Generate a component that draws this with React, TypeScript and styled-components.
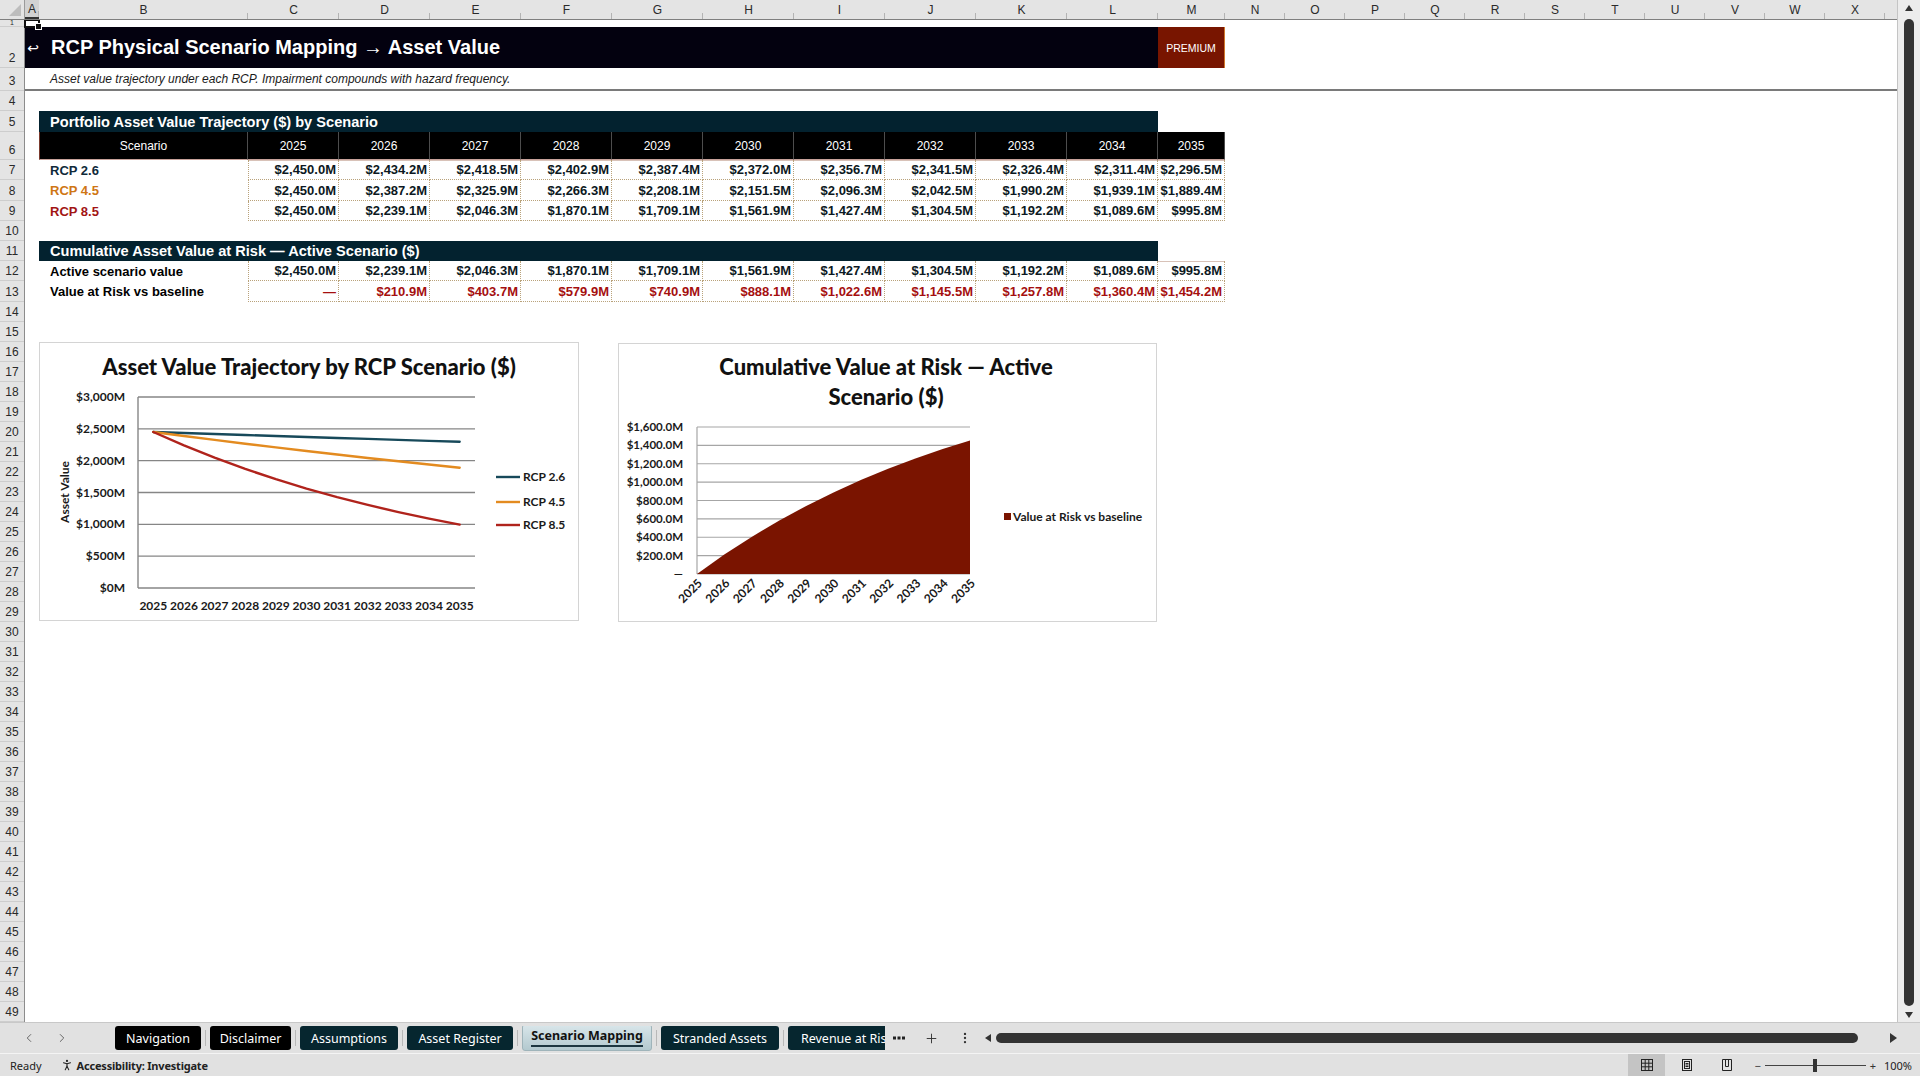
import React from "react";
import styled, { createGlobalStyle, css } from "styled-components";
import { ChevronLeft, ChevronRight, Plus, EllipsisVertical, PersonStanding } from "lucide-react";

const XL = `"Liberation Sans", Arial, sans-serif`;
const CHART = `Lato, "Open Sans", sans-serif`;
const UI = `"Noto Sans", "Segoe UI", sans-serif`;
const GRID = "14px 209px repeat(10, 91px) 67px 1fr";

const years = [2025, 2026, 2027, 2028, 2029, 2030, 2031, 2032, 2033, 2034, 2035];

const scenarios = [
  {
    label: "RCP 2.6",
    color: "#0f2a3a",
    line: "#17495a",
    values: [2450.0, 2434.2, 2418.5, 2402.9, 2387.4, 2372.0, 2356.7, 2341.5, 2326.4, 2311.4, 2296.5],
  },
  {
    label: "RCP 4.5",
    color: "#cf7614",
    line: "#e38b20",
    values: [2450.0, 2387.2, 2325.9, 2266.3, 2208.1, 2151.5, 2096.3, 2042.5, 1990.2, 1939.1, 1889.4],
  },
  {
    label: "RCP 8.5",
    color: "#a21414",
    line: "#b0231c",
    values: [2450.0, 2239.1, 2046.3, 1870.1, 1709.1, 1561.9, 1427.4, 1304.5, 1192.2, 1089.6, 995.8],
  },
];

const activeValues = scenarios[2].values;
const valueAtRisk = [0, 210.9, 403.7, 579.9, 740.9, 888.1, 1022.6, 1145.5, 1257.8, 1360.4, 1454.2];

const letters = "ABCDEFGHIJKLMNOPQRSTUVWX".split("");
const colWidth = (c: string) =>
  c === "A" ? 14 : c === "B" ? 209 : "CDEFGHIJKL".includes(c) ? 91 : c === "M" ? 67 : 60;

const rowHeights = [7, 41, 23, 20, 21, 28, 20, 21, 20, 20, 20, 20, 21, ...Array(36).fill(20)];

const fmt = (v: number, d = 1) =>
  "$" + v.toLocaleString("en-US", { minimumFractionDigits: d, maximumFractionDigits: d }) + "M";

const tabs = [
  { name: "Navigation", w: 86, bg: "#000000" },
  { name: "Disclaimer", w: 81, bg: "#000000" },
  { name: "Assumptions", w: 98, bg: "#06262f" },
  { name: "Asset Register", w: 106, bg: "#06262f" },
  { name: "Scenario Mapping", w: 130, bg: "", active: true },
  { name: "Stranded Assets", w: 118, bg: "#06262f" },
  { name: "Revenue at Risk", w: 118, bg: "#06262f" },
];

const GlobalStyle = createGlobalStyle`
  html, body { margin: 0; padding: 0; background: #fff; }
  body { font-family: ${XL}; overflow: hidden; }
  #root { width: 1920px; height: 1076px; }
`;

const Window = styled.div`
  width: 1920px;
  height: 1076px;
  display: flex;
  flex-direction: column;
  background: #e1e1e1;
`;

const Main = styled.div`
  height: 1022px;
  display: flex;
  flex: none;
`;

const GridArea = styled.div`
  width: 1898px;
  display: flex;
  flex-direction: column;
  background: #fff;
  border-right: 1px solid #c4c4c4;
  box-sizing: border-box;
`;

const ColHeadRow = styled.div`
  height: 20px;
  display: flex;
  flex: none;
  background: #e4e4e4;
  border-bottom: 1px solid #7f7f7f;
  box-sizing: border-box;
`;

const Corner = styled.div`
  width: 25px;
  flex: none;
  position: relative;
  border-right: 1px solid #9a9a9a;
  box-sizing: border-box;
  &::after {
    content: "";
    position: absolute;
    right: 3px;
    bottom: 3px;
    border-left: 12px solid transparent;
    border-bottom: 12px solid #bdbdbd;
  }
`;

const ColHead = styled.div<{ $w: number; $active?: boolean }>`
  width: ${(p) => p.$w}px;
  flex: none;
  position: relative;
  display: flex;
  align-items: center;
  justify-content: center;
  font-family: ${XL};
  font-size: 12px;
  color: #2a2a2a;
  ${(p) =>
    p.$active &&
    css`
      background: #d2d2d2;
      border-bottom: 2px solid #333;
    `}
  &::after {
    content: "";
    position: absolute;
    right: 0;
    bottom: 0;
    width: 1px;
    height: 6px;
    background: #b3b3b3;
  }
`;

const ColFill = styled.div`
  flex: 1;
`;

const Body = styled.div`
  flex: 1;
  display: flex;
  overflow: hidden;
`;

const RowHeads = styled.div`
  width: 25px;
  flex: none;
  display: flex;
  flex-direction: column;
  background: #e4e4e4;
  border-right: 1px solid #8c8c8c;
  box-sizing: border-box;
`;

const RowNum = styled.div<{ $h: number }>`
  height: ${(p) => p.$h}px;
  flex: none;
  box-sizing: border-box;
  display: flex;
  align-items: flex-end;
  justify-content: center;
  overflow: hidden;
  font-size: ${(p) => (p.$h < 10 ? 7 : 12)}px;
  line-height: ${(p) => (p.$h < 10 ? 6 : 14)}px;
  color: #2a2a2a;
  padding-bottom: ${(p) => (p.$h < 10 ? 0 : 2)}px;
  border-bottom: 1px solid #cdcdcd;
`;

const Sheet = styled.div`
  flex: 1;
  display: flex;
  flex-direction: column;
`;

const SheetRow = styled.div<{ $h: number; $rule?: boolean }>`
  height: ${(p) => p.$h}px;
  flex: none;
  display: grid;
  grid-template-columns: ${GRID};
  box-sizing: border-box;
  ${(p) => p.$rule && css`border-bottom: 2px solid #7a7a7a;`}
`;

const ActiveCell = styled.div`
  grid-column: 1;
  width: 16px;
  height: 9px;
  margin: -1px 0 0 -1px;
  box-sizing: border-box;
  border: 2px solid #111;
  position: relative;
  z-index: 2;
  &::after {
    content: "";
    position: absolute;
    right: -4px;
    bottom: -4px;
    width: 5px;
    height: 5px;
    background: #111;
    border: 1px solid #fff;
  }
`;

const TitleBar = styled.div`
  grid-column: 1 / span 12;
  background: #03010f;
  display: grid;
  grid-template-columns: 14px 1fr;
  align-items: center;
  color: #fff;
`;

const BackArrow = styled.span`
  font-family: "DejaVu Sans", sans-serif;
  font-size: 14px;
  text-align: center;
  margin-left: 2px;
`;

const TitleText = styled.span`
  padding-left: 12px;
  font-size: 20px;
  font-weight: 700;
`;

const Premium = styled.div`
  grid-column: 13;
  background: #781500;
  color: #fff;
  font-size: 10.5px;
  display: flex;
  align-items: center;
  justify-content: center;
  border-right: 1px solid #d0782c;
`;

const Subtitle = styled.div`
  grid-column: 2 / span 12;
  padding-left: 11px;
  font-size: 12px;
  font-style: italic;
  color: #1a1a1a;
  display: flex;
  align-items: center;
`;

const SectionBar = styled.div`
  grid-column: 2 / span 11;
  background: #03222f;
  color: #fff;
  font-size: 14.6px;
  font-weight: 700;
  padding-left: 11px;
  display: flex;
  align-items: center;
`;

const HeadCell = styled.div<{ $label?: boolean }>`
  background: #000;
  color: #fff;
  font-size: 12px;
  display: flex;
  align-items: center;
  justify-content: center;
  border-right: 1px solid #4d4d4d;
  border-bottom: 1px solid #c7a29a;
  ${(p) => p.$label && css`border-left: 1px solid #7a3b2e;`}
`;

const RowLabel = styled.div<{ $color?: string }>`
  grid-column: 2;
  padding-left: 11px;
  font-size: 13px;
  font-weight: 700;
  color: ${(p) => p.$color || "#000"};
  display: flex;
  align-items: center;
`;

const ValueCell = styled.div<{ $color?: string; $first?: boolean; $top?: boolean }>`
  font-size: 13px;
  font-weight: 700;
  color: ${(p) => p.$color || "#0c1822"};
  display: flex;
  align-items: center;
  justify-content: flex-end;
  padding-right: 2px;
  box-sizing: border-box;
  border-right: 1px dotted #b9a27a;
  border-bottom: 1px dotted #b9a27a;
  ${(p) => p.$first && css`border-left: 1px dotted #b9a27a;`}
  ${(p) => p.$top && css`box-shadow: inset 0 1px 0 #d8c2b8;`}
`;

const ChartsArea = styled.div`
  height: 720px;
  flex: none;
  display: flex;
  align-items: flex-start;
  gap: 39px;
  padding: 40px 0 0 14px;
  box-sizing: border-box;
`;

const ChartCard = styled.div<{ $w: number; $mt?: number }>`
  width: ${(p) => p.$w}px;
  height: 279px;
  flex: none;
  margin-top: ${(p) => p.$mt || 0}px;
  background: #fff;
  border: 1px solid #d4d4d4;
  box-sizing: border-box;
  svg {
    display: block;
    font-family: ${CHART};
    font-weight: 700;
  }
`;

const VScroll = styled.div`
  width: 22px;
  flex: none;
  display: flex;
  flex-direction: column;
  align-items: center;
  background: #ececec;
  padding: 5px 0 4px;
  box-sizing: border-box;
`;

const ArrowUp = styled.div`
  border-left: 4px solid transparent;
  border-right: 4px solid transparent;
  border-bottom: 6px solid #333;
`;

const ArrowDown = styled.div`
  border-left: 4px solid transparent;
  border-right: 4px solid transparent;
  border-top: 6px solid #333;
`;

const VThumb = styled.div`
  width: 10px;
  flex: 1;
  margin: 8px 0 6px;
  border-radius: 5px;
  background: #333;
`;

const TabBar = styled.div`
  height: 31px;
  flex: none;
  display: flex;
  align-items: center;
  background: #e1e1e1;
  border-top: 1px solid #c8c8c8;
  box-sizing: border-box;
  font-family: ${UI};
`;

const NavArrows = styled.div`
  width: 115px;
  flex: none;
  display: flex;
  align-items: center;
  gap: 19px;
  padding-left: 22px;
  box-sizing: border-box;
  color: #555;
`;

const TabStrip = styled.div`
  width: 770px;
  flex: none;
  display: flex;
  align-items: center;
  gap: 4px;
  overflow: hidden;
`;

const TabSep = styled.div`
  width: 1px;
  height: 16px;
  flex: none;
  background: #b8b8b8;
`;

const Tab = styled.div<{ $w: number; $bg: string; $active?: boolean }>`
  width: ${(p) => p.$w}px;
  height: 24px;
  flex: none;
  box-sizing: border-box;
  border-radius: 3px;
  display: flex;
  align-items: center;
  justify-content: center;
  white-space: nowrap;
  overflow: hidden;
  font-size: 12.5px;
  color: #fff;
  background: ${(p) => p.$bg};
  ${(p) =>
    p.$active &&
    css`
      height: 27px;
      margin-top: -2px;
      background: linear-gradient(#d9e6ea, #b3c9cf);
      border: 1px solid #9fb4ba;
      color: #111;
      font-weight: 700;
    `}
`;

const TabUnderline = styled.span`
  border-bottom: 2px solid #1d3640;
  padding-bottom: 1px;
`;

const BarButton = styled.div<{ $w: number }>`
  width: ${(p) => p.$w}px;
  flex: none;
  display: flex;
  align-items: center;
  justify-content: center;
  color: #333;
`;

const HScroll = styled.div`
  flex: 1;
  display: flex;
  align-items: center;
  padding-right: 23px;
`;

const ArrowLeft = styled.div`
  margin-left: 4px;
  border-top: 4px solid transparent;
  border-bottom: 4px solid transparent;
  border-right: 6px solid #333;
`;

const ArrowRight = styled.div`
  margin-left: auto;
  border-top: 5px solid transparent;
  border-bottom: 5px solid transparent;
  border-left: 7px solid #333;
`;

const HThumb = styled.div`
  width: 862px;
  height: 10px;
  margin-left: 5px;
  border-radius: 5px;
  background: #333;
`;

const StatusBar = styled.div`
  height: 23px;
  flex: none;
  display: flex;
  align-items: center;
  background: #e1e1e1;
  border-top: 1px solid #f4f4f4;
  box-sizing: border-box;
  padding-left: 10px;
  font-family: ${UI};
  font-size: 11px;
  color: #222;
`;

const Access = styled.div`
  display: flex;
  align-items: center;
  gap: 3px;
  margin-left: 18px;
  font-weight: 700;
  letter-spacing: -0.2px;
`;

const StatusRight = styled.div`
  margin-left: auto;
  height: 100%;
  display: flex;
  align-items: center;
  padding-right: 8px;
`;

const ViewBtn = styled.div<{ $on?: boolean }>`
  width: 37px;
  height: 100%;
  margin-right: 3px;
  display: flex;
  align-items: center;
  justify-content: center;
  background: ${(p) => (p.$on ? "#c4c4c4" : "transparent")};
`;

const Zoom = styled.div`
  display: flex;
  align-items: center;
  gap: 4px;
  margin-left: 6px;
  color: #333;
`;

const Track = styled.div`
  width: 101px;
  height: 1px;
  background: #444;
  position: relative;
  &::after {
    content: "";
    position: absolute;
    left: 48px;
    top: -6px;
    width: 4px;
    height: 13px;
    background: #333;
  }
`;

const Percent = styled.span`
  margin-left: 8px;
`;

const LineChart = () => {
  const px0 = 99, px1 = 436, py0 = 55, py1 = 246;
  const cw = (px1 - px0) / 11;
  const x = (i: number) => px0 + (i + 0.5) * cw;
  const y = (v: number) => py1 - (v / 3000) * (py1 - py0);
  const ticks = [0, 500, 1000, 1500, 2000, 2500, 3000];
  return (
    <ChartCard $w={540}>
      <svg width={538} height={277} viewBox="1 1 538 277">
        <text x={270} y={33} textAnchor="middle" fontSize={22} fontWeight={900} fill="#111">
          Asset Value Trajectory by RCP Scenario ($)
        </text>
        {ticks.map((t) => (
          <g key={t}>
            <line x1={px0} x2={px1} y1={y(t)} y2={y(t)} stroke="#868686" strokeWidth={1.4} />
            <text x={86} y={y(t) + 4} textAnchor="end" fontSize={12} fill="#1a1a1a">
              {t === 0 ? "$0M" : "$" + t.toLocaleString("en-US") + "M"}
            </text>
          </g>
        ))}
        <line x1={px0} x2={px0} y1={py0} y2={py1} stroke="#868686" strokeWidth={1.4} />
        <text transform="translate(30,150) rotate(-90)" textAnchor="middle" fontSize={12} fill="#1a1a1a">
          Asset Value
        </text>
        {years.map((yr, i) => (
          <text key={yr} x={x(i)} y={268} textAnchor="middle" fontSize={12} fill="#1a1a1a">
            {yr}
          </text>
        ))}
        {scenarios.map((s) => (
          <polyline
            key={s.label}
            points={s.values.map((v, i) => `${x(i)},${y(v)}`).join(" ")}
            fill="none"
            stroke={s.line}
            strokeWidth={2.4}
            strokeLinejoin="round"
            strokeLinecap="round"
          />
        ))}
        {scenarios.map((s, i) => {
          const ly = [135, 160, 183][i];
          return (
            <g key={s.label}>
              <line x1={457} x2={481} y1={ly} y2={ly} stroke={s.line} strokeWidth={2.4} />
              <text x={484} y={ly + 4} fontSize={12} fill="#1a1a1a">
                {s.label}
              </text>
            </g>
          );
        })}
      </svg>
    </ChartCard>
  );
};

const AreaChart = () => {
  const px0 = 79, px1 = 352, py0 = 84, py1 = 231;
  const x = (i: number) => px0 + (i * (px1 - px0)) / 10;
  const y = (v: number) => py1 - (v / 1600) * (py1 - py0);
  const ticks = [0, 200, 400, 600, 800, 1000, 1200, 1400, 1600];
  const area =
    `M${x(0)},${py1} ` +
    valueAtRisk.map((v, i) => `L${x(i)},${y(v)}`).join(" ") +
    ` L${x(10)},${py1} Z`;
  return (
    <ChartCard $w={539} $mt={1}>
      <svg width={537} height={277} viewBox="1 1 537 277">
        <text x={268} y={32} textAnchor="middle" fontSize={22} fontWeight={900} fill="#111">
          Cumulative Value at Risk — Active
        </text>
        <text x={268} y={62} textAnchor="middle" fontSize={22} fontWeight={900} fill="#111">
          Scenario ($)
        </text>
        {ticks.map((t) => (
          <g key={t}>
            <line x1={px0} x2={px1} y1={y(t)} y2={y(t)} stroke="#a6a6a6" strokeWidth={1.2} />
            <text x={65} y={y(t) + 4} textAnchor="end" fontSize={11.5} fill="#1a1a1a">
              {t === 0 ? "—" : fmt(t)}
            </text>
          </g>
        ))}
        <line x1={px0} x2={px0} y1={py0} y2={py1} stroke="#a6a6a6" strokeWidth={1.2} />
        <path d={area} fill="#7a1400" />
        {years.map((yr, i) => (
          <text
            key={yr}
            transform={`translate(${x(i) + 6},241) rotate(-45)`}
            textAnchor="end"
            fontSize={12}
            fill="#1a1a1a"
          >
            {yr}
          </text>
        ))}
        <rect x={386} y={170} width={7} height={7} fill="#7a1400" />
        <text x={395} y={178} fontSize={12} fill="#1a1a1a">
          Value at Risk vs baseline
        </text>
      </svg>
    </ChartCard>
  );
};

const DotsIcon = () => (
  <svg width="12" height="4" viewBox="0 0 12 4" fill="#222">
    <rect x="0" y="0.5" width="3" height="3" />
    <rect x="4.5" y="0.5" width="3" height="3" />
    <rect x="9" y="0.5" width="3" height="3" />
  </svg>
);

const GridIcon = () => (
  <svg width="14" height="14" viewBox="0 0 14 14" fill="none" stroke="#222" strokeWidth="1">
    <rect x="1.5" y="1.5" width="11" height="11" />
    <path d="M5.2 1.5v11M8.8 1.5v11M1.5 5.2h11M1.5 8.8h11" />
  </svg>
);

const PageIcon = () => (
  <svg width="14" height="14" viewBox="0 0 14 14" fill="none" stroke="#222" strokeWidth="1">
    <rect x="2.5" y="1.5" width="9" height="11" />
    <rect x="4.5" y="3.5" width="5" height="7" />
    <path d="M5.5 5.5h3M5.5 7h3M5.5 8.5h3" />
  </svg>
);

const BreakIcon = () => (
  <svg width="14" height="14" viewBox="0 0 14 14" fill="none" stroke="#222" strokeWidth="1">
    <path d="M2.5 1.5h9v11h-9z" />
    <path d="M5.5 1.5v7h3v-7" />
  </svg>
);

export default function App() {
  return (
    <>
      <GlobalStyle />
      <Window>
        <Main>
          <GridArea>
            <ColHeadRow>
              <Corner />
              {letters.map((c) => (
                <ColHead key={c} $w={colWidth(c)} $active={c === "A"}>
                  {c}
                </ColHead>
              ))}
              <ColFill />
            </ColHeadRow>
            <Body>
              <RowHeads>
                {rowHeights.map((h, i) => (
                  <RowNum key={i} $h={h}>
                    {i + 1}
                  </RowNum>
                ))}
              </RowHeads>
              <Sheet>
                <SheetRow $h={7}>
                  <ActiveCell />
                </SheetRow>
                <SheetRow $h={41}>
                  <TitleBar>
                    <BackArrow>↩</BackArrow>
                    <TitleText>RCP Physical Scenario Mapping → Asset Value</TitleText>
                  </TitleBar>
                  <Premium>PREMIUM</Premium>
                </SheetRow>
                <SheetRow $h={23} $rule>
                  <Subtitle>
                    Asset value trajectory under each RCP. Impairment compounds with hazard frequency.
                  </Subtitle>
                </SheetRow>
                <SheetRow $h={20} />
                <SheetRow $h={21}>
                  <SectionBar>Portfolio Asset Value Trajectory ($) by Scenario</SectionBar>
                </SheetRow>
                <SheetRow $h={28}>
                  <HeadCell $label style={{ gridColumn: 2 }}>
                    Scenario
                  </HeadCell>
                  {years.map((yr) => (
                    <HeadCell key={yr}>{yr}</HeadCell>
                  ))}
                </SheetRow>
                {scenarios.map((s, ri) => (
                  <SheetRow key={s.label} $h={[20, 21, 20][ri]}>
                    <RowLabel $color={s.color}>{s.label}</RowLabel>
                    {s.values.map((v, i) => (
                      <ValueCell key={i} $first={i === 0} $top={ri === 0}>
                        {fmt(v)}
                      </ValueCell>
                    ))}
                  </SheetRow>
                ))}
                <SheetRow $h={20} />
                <SheetRow $h={20}>
                  <SectionBar>Cumulative Asset Value at Risk — Active Scenario ($)</SectionBar>
                </SheetRow>
                <SheetRow $h={20}>
                  <RowLabel>Active scenario value</RowLabel>
                  {activeValues.map((v, i) => (
                    <ValueCell key={i} $first={i === 0} $top={i === 10}>
                      {fmt(v)}
                    </ValueCell>
                  ))}
                </SheetRow>
                <SheetRow $h={21}>
                  <RowLabel>Value at Risk vs baseline</RowLabel>
                  {valueAtRisk.map((v, i) => (
                    <ValueCell key={i} $first={i === 0} $color="#a50f0f">
                      {i === 0 ? "—" : fmt(v)}
                    </ValueCell>
                  ))}
                </SheetRow>
                <ChartsArea>
                  <LineChart />
                  <AreaChart />
                </ChartsArea>
              </Sheet>
            </Body>
          </GridArea>
          <VScroll>
            <ArrowUp />
            <VThumb />
            <ArrowDown />
          </VScroll>
        </Main>
        <TabBar>
          <NavArrows>
            <ChevronLeft size={14} strokeWidth={1.5} />
            <ChevronRight size={14} strokeWidth={1.5} />
          </NavArrows>
          <TabStrip>
            {tabs.map((t, i) => (
              <React.Fragment key={t.name}>
                {i > 0 && <TabSep />}
                <Tab $w={t.w} $bg={t.bg} $active={t.active}>
                  {t.active ? <TabUnderline>{t.name}</TabUnderline> : t.name}
                </Tab>
              </React.Fragment>
            ))}
          </TabStrip>
          <BarButton $w={28}>
            <DotsIcon />
          </BarButton>
          <BarButton $w={36}>
            <Plus size={15} strokeWidth={1.5} />
          </BarButton>
          <BarButton $w={32}>
            <EllipsisVertical size={14} strokeWidth={2} />
          </BarButton>
          <HScroll>
            <ArrowLeft />
            <HThumb />
            <ArrowRight />
          </HScroll>
        </TabBar>
        <StatusBar>
          <span>Ready</span>
          <Access>
            <PersonStanding size={14} strokeWidth={1.8} />
            <span>Accessibility: Investigate</span>
          </Access>
          <StatusRight>
            <ViewBtn $on>
              <GridIcon />
            </ViewBtn>
            <ViewBtn>
              <PageIcon />
            </ViewBtn>
            <ViewBtn>
              <BreakIcon />
            </ViewBtn>
            <Zoom>
              <span>−</span>
              <Track />
              <span>+</span>
            </Zoom>
            <Percent>100%</Percent>
          </StatusRight>
        </StatusBar>
      </Window>
    </>
  );
}
